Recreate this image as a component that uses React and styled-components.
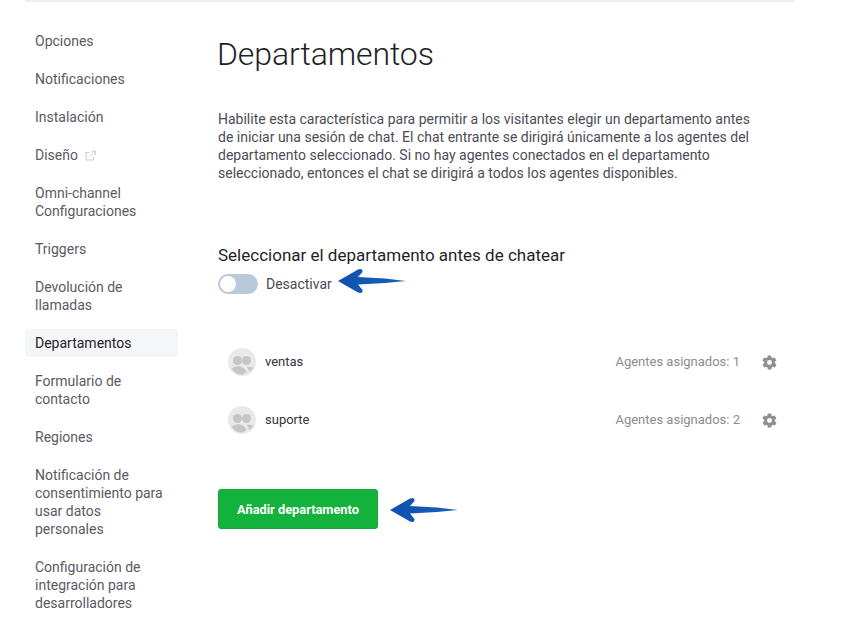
import React from 'react';
import styled, { createGlobalStyle } from 'styled-components';

const Global = createGlobalStyle`
  html, body { margin: 0; padding: 0; background: #fff; overflow: hidden; }
  body { font-family: Roboto, "Liberation Sans", sans-serif; font-size: 14px; line-height: 18px; color: #4a4a55; }
`;

const Page = styled.div`
  width: 852px;
  height: 631px;
  box-sizing: border-box;
  padding: 0 57px 0 25px;
  overflow: hidden;
`;
const Frame = styled.div`
  border-top: 2px solid #eeeff0;
  display: flex;
  gap: 40px;
`;
const Sidebar = styled.nav`
  width: 153px;
  flex: none;
  padding-top: 25px;
  display: flex;
  flex-direction: column;
  gap: 10px;
`;
const NavItem = styled.div`
  padding: 5px 10px;
  border-radius: 4px;
  color: ${p => (p.$active ? '#24242c' : '#5a5a64')};
  background: ${p => (p.$active ? '#f5f6f7' : 'transparent')};
`;
const ExtIcon = styled.svg`
  width: 11px;
  height: 11px;
  margin-left: 7px;
  vertical-align: -1px;
`;
const Main = styled.main`
  flex: 1;
  min-width: 0;
`;
const Title = styled.h1`
  margin: 33px 0 0 -1px;
  font-size: 32px;
  line-height: 38px;
  font-weight: 300;
  letter-spacing: -0.1px;
  color: #1f1f27;
`;
const Intro = styled.p`
  margin: 37px 0 0;
  width: 540px;
  color: #4c4c57;
`;
const SectionTitle = styled.h2`
  margin: 63px 0 0;
  font-size: 17px;
  line-height: 20px;
  font-weight: 400;
  color: #1f1f27;
`;
const ToggleRow = styled.div`
  margin-top: 9px;
  display: flex;
  align-items: center;
  gap: 8px;
  height: 20px;
`;
const Track = styled.div`
  width: 40px;
  height: 20px;
  box-sizing: border-box;
  padding: 2px;
  border-radius: 10px;
  background: #b9c9dc;
`;
const Knob = styled.div`
  width: 16px;
  height: 16px;
  border-radius: 50%;
  background: #fff;
`;
const Arrow = styled.svg`
  flex: none;
  display: block;
  margin-left: ${p => p.$shiftX}px;
  transform: translateY(${p => p.$shiftY}px);
`;
const List = styled.div`
  margin-top: 39px;
  display: flex;
  flex-direction: column;
`;
const Row = styled.div`
  height: 58px;
  display: flex;
  align-items: center;
  padding: 0 17px 0 10px;
`;
const Avatar = styled.svg`
  width: 28px;
  height: 28px;
  flex: none;
`;
const Name = styled.span`
  margin-left: 9px;
  flex: 1;
  font-size: 13px;
  color: #33333c;
`;
const Assigned = styled.span`
  font-size: 13px;
  color: #8b8b93;
`;
const Gear = styled.svg`
  width: 17px;
  height: 17px;
  margin-left: 21px;
  flex: none;
`;
const ButtonRow = styled.div`
  margin-top: 40px;
  display: flex;
  align-items: center;
  gap: 12px;
`;
const AddButton = styled.button`
  width: 160px;
  height: 40px;
  border: 1px solid #12a73a;
  border-radius: 3px;
  background: #12b23c;
  color: #fff;
  font: 700 12.8px Roboto, sans-serif;
  padding: 0;
`;

const BlueArrow = ({ shiftX = 0, shiftY = 0 }) => (
  <Arrow width={68} height={26} viewBox="0 0 68 26" $shiftX={shiftX} $shiftY={shiftY}>
    <defs>
      <linearGradient id="ba" x1="0" y1="0" x2="1" y2="0">
        <stop offset="0" stopColor="#0f4fb0" />
        <stop offset="1" stopColor="#1763bb" />
      </linearGradient>
    </defs>
    <path
      d="M0 13 L20 1.5 Q25 0 24.5 4 L20 9 L47 10.5 L68 13 L47 15 L20 16.5 L24.5 22 Q25 26 20 24.5 Z"
      fill="url(#ba)"
    />
  </Arrow>
);

const AvatarIcon = () => (
  <Avatar viewBox="0 0 28 28">
    <circle cx="14" cy="14" r="14" fill="#e9e9ea" />
    <circle cx="9.5" cy="12.5" r="4.5" fill="#c6c6c8" />
    <circle cx="18.5" cy="12.5" r="4.5" fill="#c6c6c8" />
    <path d="M3.5 21 Q6 18 11 18.2 Q16 19 18.5 24 L15 26.5 Q8 27 3.5 21Z" fill="#c6c6c8" />
    <path d="M19 18.5 L25.5 19.5 L21.5 24Z" fill="#c6c6c8" />
  </Avatar>
);

const GearIcon = () => (
  <Gear viewBox="0 0 24 24">
    <path
      fill="#8f8f96"
      fillRule="evenodd"
      d="M19.4 13a7.6 7.6 0 0 0 0-2l2.1-1.6a.5.5 0 0 0 .1-.6l-2-3.5a.5.5 0 0 0-.6-.2l-2.5 1a7.3 7.3 0 0 0-1.7-1l-.4-2.7a.5.5 0 0 0-.5-.4h-4a.5.5 0 0 0-.5.4l-.4 2.7a7.3 7.3 0 0 0-1.7 1l-2.5-1a.5.5 0 0 0-.6.2l-2 3.5a.5.5 0 0 0 .1.6L4.6 11a7.6 7.6 0 0 0 0 2l-2.1 1.6a.5.5 0 0 0-.1.6l2 3.5c.1.2.4.3.6.2l2.5-1c.5.4 1.1.7 1.7 1l.4 2.7c0 .2.2.4.5.4h4c.3 0 .5-.2.5-.4l.4-2.7c.6-.3 1.2-.6 1.7-1l2.5 1c.2.1.5 0 .6-.2l2-3.5a.5.5 0 0 0-.1-.6L19.4 13zM12 15.5a3.5 3.5 0 1 1 0-7 3.5 3.5 0 0 1 0 7z"
    />
  </Gear>
);

const ExternalIcon = () => (
  <ExtIcon viewBox="0 0 11 11" fill="none" stroke="#c9cbd0" strokeWidth="1">
    <path d="M4.5 2.5H1v7.5h7.5V7" />
    <path d="M5 6.5 10 1.5M6.5 1H10.5V5" />
  </ExtIcon>
);

const nav = [
  'Opciones',
  'Notificaciones',
  'Instalación',
  'Diseño',
  'Omni-channel Configuraciones',
  'Triggers',
  'Devolución de llamadas',
  'Departamentos',
  'Formulario de contacto',
  'Regiones',
  'Notificación de consentimiento para usar datos personales',
  'Configuración de integración para desarrolladores',
];

const departments = [
  { name: 'ventas', count: 1 },
  { name: 'suporte', count: 2 },
];

export default function App() {
  return (
    <Page>
      <Global />
      <Frame>
        <Sidebar>
          {nav.map(label => (
            <NavItem key={label} $active={label === 'Departamentos'}>
              {label}
              {label === 'Diseño' && <ExternalIcon />}
            </NavItem>
          ))}
        </Sidebar>
        <Main>
          <Title>Departamentos</Title>
          <Intro>
            Habilite esta característica para permitir a los visitantes elegir un departamento antes de iniciar una sesión de chat. El chat entrante se dirigirá únicamente a los agentes del departamento seleccionado. Si no hay agentes conectados en el departamento seleccionado, entonces el chat se dirigirá a todos los agentes disponibles.
          </Intro>
          <SectionTitle>Seleccionar el departamento antes de chatear</SectionTitle>
          <ToggleRow>
            <Track><Knob /></Track>
            <span>Desactivar</span>
            <BlueArrow shiftX={-2} shiftY={-3} />
          </ToggleRow>
          <List>
            {departments.map(d => (
              <Row key={d.name}>
                <AvatarIcon />
                <Name>{d.name}</Name>
                <Assigned>Agentes asignados: {d.count}</Assigned>
                <GearIcon />
              </Row>
            ))}
          </List>
          <ButtonRow>
            <AddButton>Añadir departamento</AddButton>
            <BlueArrow shiftY={1} />
          </ButtonRow>
        </Main>
      </Frame>
    </Page>
  );
}
